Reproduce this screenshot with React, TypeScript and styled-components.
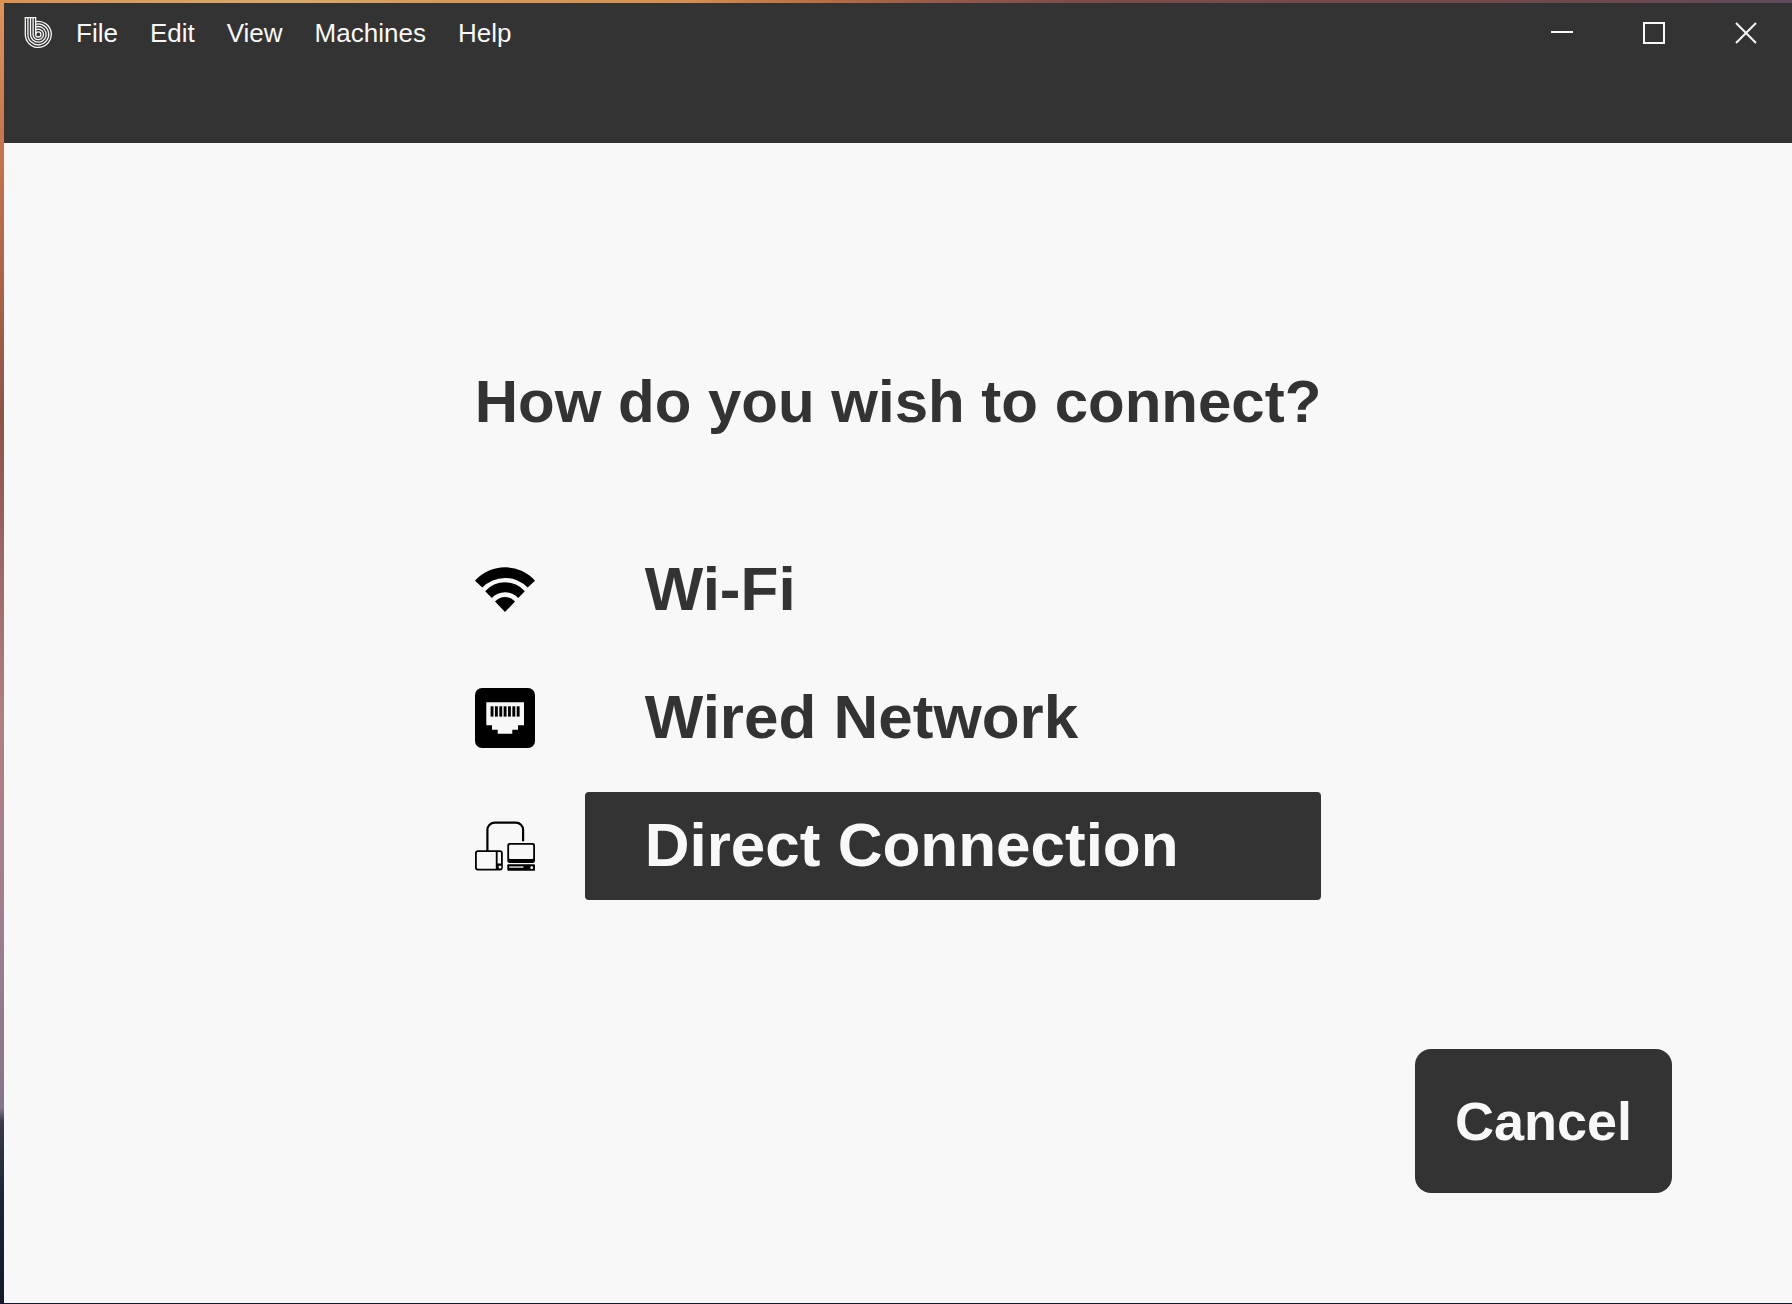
import { useState } from "react";
import type { ReactNode } from "react";
import styled, { createGlobalStyle } from "styled-components";

const colors = {
  dark: "#333333",
  light: "#f8f8f8",
};

const GlobalStyle = createGlobalStyle`
  *, *::before, *::after { box-sizing: border-box; }
  body {
    margin: 0;
    font-family: Arial, "Liberation Sans", sans-serif;
    color: ${colors.dark};
  }
  button {
    margin: 0;
    border: 0;
    padding: 0;
    background: none;
    color: inherit;
    font: inherit;
    cursor: pointer;
  }
  svg { display: block; }
`;

const Desktop = styled.div`
  display: flex;
  min-height: 100vh;
  padding: 3px 0 1px 4px;
  background:
    linear-gradient(to right, #dc9150 0%, #dcaa68 16%, #d99a55 24%, #d98f4c 38%, #c0703f 45%, #9a5a48 52%, #7d4c48 60%, #70484c 88%, #5f4a5c 100%) top / 100% 3px no-repeat,
    linear-gradient(to bottom, #e0955a 0%, #c8784e 10%, #b0664a 20%, #8d5348 32%, #9c6464 42%, #b07f82 55%, #a07f90 70%, #857689 85%, #3a3a4c 86%, #1c2438 92%, #141a2c 100%);
`;

const Window = styled.div`
  display: flex;
  flex: 1;
  flex-direction: column;
  background: ${colors.light};
`;

const Header = styled.header`
  height: 140px;
  background: ${colors.dark};
  color: ${colors.light};
`;

const TitleBar = styled.div`
  display: flex;
  align-items: center;
  height: 60px;
  padding-left: 20px;
`;

const Menu = styled.nav`
  display: flex;
  flex: 1;
  padding-left: 8px;
`;

const MenuButton = styled.button`
  padding: 0 16px;
  font-size: 26px;
  line-height: 32px;
`;

const WindowButton = styled.button`
  display: flex;
  align-items: center;
  justify-content: center;
  width: 92px;
  height: 60px;
`;

const Main = styled.main`
  display: flex;
  flex: 1;
  flex-direction: column;
  align-items: center;
  padding-top: 225px;
`;

const Chooser = styled.section`
  display: flex;
  flex-direction: column;
  gap: 100px;
`;

const Question = styled.h1`
  margin: 0;
  font-size: 60px;
  line-height: 68px;
`;

const Options = styled.ul`
  display: flex;
  flex-direction: column;
  gap: 20px;
  margin: 0;
  padding: 0;
  list-style: none;
`;

const Option = styled.li`
  display: flex;
  align-items: center;
  gap: 50px;
`;

const OptionButton = styled.button<{ $selected: boolean }>`
  flex: 1;
  padding: 18px 60px 20px;
  border-radius: 4px;
  background: ${(p) => (p.$selected ? colors.dark : "transparent")};
  color: ${(p) => (p.$selected ? colors.light : colors.dark)};
  font-size: 62px;
  font-weight: bold;
  line-height: 70px;
  text-align: left;
`;

const Footer = styled.footer`
  align-self: flex-end;
  margin-top: auto;
  padding: 40px 120px 110px;
`;

const CancelButton = styled.button`
  padding: 40px;
  border-radius: 16px;
  background: ${colors.dark};
  color: ${colors.light};
  font-size: 54px;
  font-weight: bold;
  line-height: 64px;
`;

function Logo() {
  return (
    <svg width="28" height="32" viewBox="0 0 28 32" fill="none" stroke={colors.light} strokeWidth="1.3" aria-hidden="true">
      <path d="M1.3 .7V17.4A13 13 0 1 0 11.7 4.7" />
      <path d="M3.9 .7V17.4A10.4 10.4 0 1 0 11.7 7.3" />
      <path d="M6.5 .7V17.4A7.8 7.8 0 1 0 11.7 10" />
      <path d="M9.1 .7V17.4A5.2 5.2 0 1 0 11.7 12.9" />
      <path d="M.7 .7H11.7V17.4" />
      <circle cx="14.3" cy="17.4" r="2.6" />
    </svg>
  );
}

function WifiIcon() {
  return (
    <svg width="60" height="60" viewBox="0 0 60 60" aria-hidden="true">
      <path d="M0 20.7A40.3 40.3 0 0 1 60 20.7L52.7 27.5A31.6 31.6 0 0 0 7.3 27.5Z" />
      <path d="M10.2 31.2A26.4 26.4 0 0 1 49.8 31.2L43.2 38A18 18 0 0 0 16.8 38Z" />
      <path d="M20 41.6A13 13 0 0 1 40 41.6L30 52Z" />
    </svg>
  );
}

function EthernetIcon() {
  return (
    <svg width="60" height="60" viewBox="0 0 60 60" aria-hidden="true">
      <rect width="60" height="60" rx="7" />
      <path fill={colors.light} d="M11.3 14.3H49V37.3H43V41.7H37.3V45.7H22.7V41.7H17V37.3H11.3Z" />
      {[0, 1, 2, 3, 4, 5, 6].map((pin) => (
        <rect key={pin} x={15.6 + pin * 4.35} y="18.3" width="2.9" height="10.3" />
      ))}
    </svg>
  );
}

function DirectIcon() {
  return (
    <svg width="60" height="60" viewBox="0 0 60 60" aria-hidden="true">
      <path fill="none" stroke="#000" strokeWidth="2.2" d="M12.4 35V14A7.3 7.3 0 0 1 19.7 6.7H40.8A7.3 7.3 0 0 1 48.1 14V25.2" />
      <rect x=".9" y="35.2" width="26" height="18.4" rx="2" fill="none" stroke="#000" strokeWidth="1.8" />
      <path d="M20.8 35H22.6V47.5H27V54H20.8Z" />
      <circle cx="25" cy="51" r="1.5" fill={colors.light} />
      <path fillRule="evenodd" d="M34.6 27H57.7A2.3 2.3 0 0 1 60 29.3V44.8A2.3 2.3 0 0 1 57.7 47.1H34.6A2.3 2.3 0 0 1 32.3 44.8V29.3A2.3 2.3 0 0 1 34.6 27ZM35.2 28.8A1.1 1.1 0 0 0 34.1 29.9V41.9A1.1 1.1 0 0 0 35.2 43H57.1A1.1 1.1 0 0 0 58.2 41.9V29.9A1.1 1.1 0 0 0 57.1 28.8Z" />
      <rect x="32.3" y="48.2" width="27.7" height="6.6" rx="1" />
      <rect x="34.2" y="50.4" width="14.2" height="1.3" fill={colors.light} />
      <circle cx="56.7" cy="51.7" r="1.4" fill={colors.light} />
    </svg>
  );
}

function ControlIcon({ path }: { path: string }) {
  return (
    <svg width="22" height="22" viewBox="0 0 22 22" fill="none" stroke={colors.light} strokeWidth="2" aria-hidden="true">
      <path d={path} />
    </svg>
  );
}

const menuItems = ["File", "Edit", "View", "Machines", "Help"];

const windowControls = [
  { label: "Minimize", path: "M0 10H22" },
  { label: "Maximize", path: "M1 1H21V21H1Z" },
  { label: "Close", path: "M1 1L21 21M21 1L1 21" },
];

const connections: { name: string; icon: ReactNode }[] = [
  { name: "Wi-Fi", icon: <WifiIcon /> },
  { name: "Wired Network", icon: <EthernetIcon /> },
  { name: "Direct Connection", icon: <DirectIcon /> },
];

export default function App() {
  const [selected, setSelected] = useState("Direct Connection");

  return (
    <Desktop>
      <GlobalStyle />
      <Window>
        <Header>
          <TitleBar>
            <Logo />
            <Menu>
              {menuItems.map((item) => (
                <MenuButton key={item} type="button">{item}</MenuButton>
              ))}
            </Menu>
            {windowControls.map(({ label, path }) => (
              <WindowButton key={label} type="button" aria-label={label}>
                <ControlIcon path={path} />
              </WindowButton>
            ))}
          </TitleBar>
        </Header>
        <Main>
          <Chooser>
            <Question>How do you wish to connect?</Question>
            <Options>
              {connections.map(({ name, icon }) => (
                <Option key={name}>
                  {icon}
                  <OptionButton
                    type="button"
                    $selected={selected === name}
                    aria-pressed={selected === name}
                    onClick={() => setSelected(name)}
                  >
                    {name}
                  </OptionButton>
                </Option>
              ))}
            </Options>
          </Chooser>
          <Footer>
            <CancelButton type="button">Cancel</CancelButton>
          </Footer>
        </Main>
      </Window>
    </Desktop>
  );
}
